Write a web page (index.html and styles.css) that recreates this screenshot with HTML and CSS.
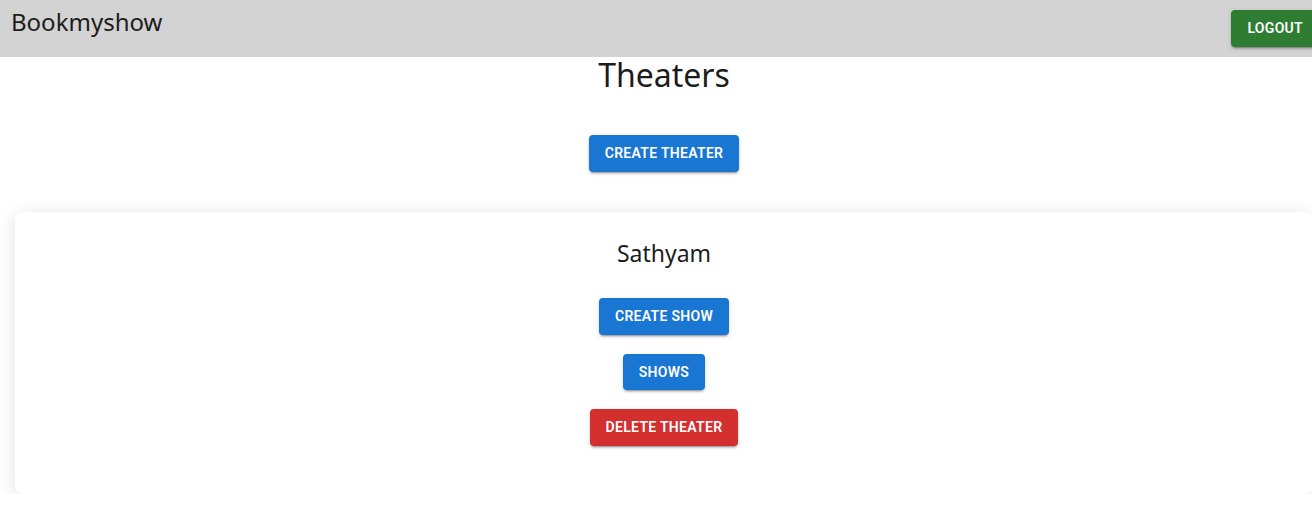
FILE: index.html
```html
<!DOCTYPE html>
<html>
<head>
<meta charset="utf-8">
<link rel="stylesheet" href="styles.css">
</head>
<body>
<div class="page">
  <header class="topbar">
    <div class="brand">Bookmyshow</div>
    <button class="btn btn-green">Logout</button>
  </header>
  <main class="content">
    <h1 class="title">Theaters</h1>
    <div class="create-row">
      <button class="btn btn-blue">Create Theater</button>
    </div>
    <section class="card">
      <h2 class="card-title">Sathyam</h2>
      <div class="card-actions">
        <button class="btn btn-blue">Create Show</button>
        <button class="btn btn-blue">Shows</button>
        <button class="btn btn-red">Delete Theater</button>
      </div>
    </section>
  </main>
</div>
</body>
</html>
```
FILE: styles.css
```css
html, body {
  margin: 0;
  padding: 0;
  overflow: hidden;
  background: #fff;
}
.page {
  width: 1328px;
  font-family: "Noto Sans", "Open Sans", sans-serif;
  color: #1c1c1c;
}
.topbar {
  height: 57px;
  background: #d3d3d3;
  display: flex;
  justify-content: space-between;
  align-items: flex-start;
  padding: 0 9px 0 11px;
}
.brand {
  font-size: 24px;
  line-height: 1;
  padding-top: 10px;
}
.btn {
  font-family: Roboto, "Liberation Sans", sans-serif;
  font-weight: 600;
  font-size: 14px;
  line-height: 24.5px;
  letter-spacing: 0.3px;
  text-transform: uppercase;
  color: #fff;
  border: none;
  border-radius: 4px;
  padding: 6px 16px;
  cursor: pointer;
  box-shadow: 0 3px 1px -2px rgba(0,0,0,0.2), 0 2px 2px 0 rgba(0,0,0,0.14), 0 1px 5px 0 rgba(0,0,0,0.12);
}
.btn-green { background: #2e7d32; margin-top: 10px; }
.btn-blue { background: #1976d2; }
.btn-red { background: #d32f2f; }
.content {
  display: flex;
  flex-direction: column;
  align-items: center;
  padding: 0 15px;
}
.title {
  margin: 0;
  font-size: 32px;
  font-weight: 400;
  line-height: 1;
  padding-top: 2px;
}
.create-row {
  margin-top: 44px;
}
.card {
  align-self: stretch;
  margin-top: 40px;
  background: #fff;
  border-radius: 8px;
  box-shadow: 0 3px 18px rgba(0,0,0,0.13);
  display: flex;
  flex-direction: column;
  align-items: center;
  padding: 28px 0 48px;
}
.card-title {
  margin: 0;
  font-size: 23px;
  font-weight: 400;
  line-height: 1.2;
}
.card-actions {
  margin-top: 31px;
  display: flex;
  flex-direction: column;
  align-items: center;
  gap: 19px;
}
```
